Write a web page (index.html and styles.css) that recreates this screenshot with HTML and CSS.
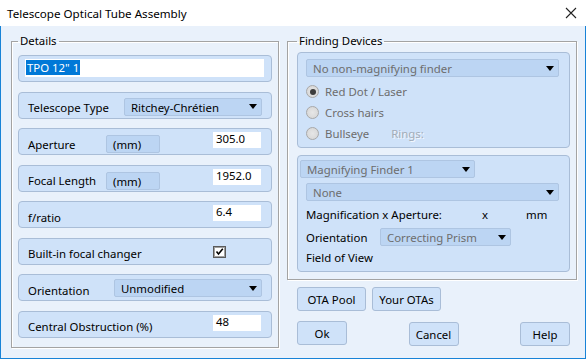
FILE: index.html
```html
<!DOCTYPE html>
<html lang="en">
    <head>
        <meta charset="UTF-8" />
        <title>Telescope Optical Tube Assembly</title>
        <link rel="stylesheet" href="styles.css">
    </head>

    <body>
        <div class="window">
            <header class="titlebar">
                <span class="title">Telescope Optical Tube Assembly</span>
                <svg class="close" width="12" height="12" viewBox="0 0 12 12">
                    <path d="M1 1 L11 11 M11 1 L1 11" stroke="#222" stroke-width="1.1" fill="none" />
                </svg>
            </header>

            <main class="content">
                <fieldset class="group details">
                    <legend>Details</legend>

                    <div class="row name_row">
                        <div class="name_input"><span class="selected">TPO 12" 1</span></div>
                    </div>
                    <div class="row">
                        <span class="lbl">Telescope Type</span>
                        <div class="combo type_combo"><span>Ritchey-Chrétien</span><i class="arrow"></i></div>
                    </div>
                    <div class="row">
                        <span class="lbl unit_lbl">Aperture</span>
                        <span class="unit">(mm)</span>
                        <span class="field">305.0</span>
                    </div>
                    <div class="row">
                        <span class="lbl unit_lbl">Focal Length</span>
                        <span class="unit">(mm)</span>
                        <span class="field">1952.0</span>
                    </div>
                    <div class="row">
                        <span class="lbl">f/ratio</span>
                        <span class="field">6.4</span>
                    </div>
                    <div class="row">
                        <span class="lbl">Built-in focal changer</span>
                        <svg class="check" width="13" height="12" viewBox="0 0 13 12">
                            <rect x="0.5" y="0.5" width="12" height="11" fill="#fff" stroke="#5a5a5a" />
                            <rect x="1.5" y="1.5" width="10" height="9" fill="none" stroke="#a0a0a0" />
                            <path d="M3.5 5.5 L5.5 8 L9.8 2.8" stroke="#000" stroke-width="1.6" fill="none" />
                        </svg>
                    </div>
                    <div class="row">
                        <span class="lbl">Orientation</span>
                        <div class="combo orient_combo"><span>Unmodified</span><i class="arrow"></i></div>
                    </div>
                    <div class="row">
                        <span class="lbl">Central Obstruction (%)</span>
                        <span class="field">48</span>
                    </div>
                </fieldset>

                <div class="right_col">
                    <fieldset class="group finding">
                        <legend>Finding Devices</legend>

                        <div class="panel finder_panel">
                            <div class="combo wide_combo off"><span>No non-magnifying finder</span><i class="arrow"></i></div>
                            <div class="radio_row"><i class="radio on"></i><span class="off_text">Red Dot / Laser</span></div>
                            <div class="radio_row"><i class="radio"></i><span class="off_text">Cross hairs</span></div>
                            <div class="radio_row"><i class="radio"></i><span class="off_text">Bullseye</span><span class="rings">Rings:</span></div>
                        </div>

                        <div class="panel mag_panel">
                            <div class="combo mag_combo off"><span>Magnifying Finder 1</span><i class="arrow"></i></div>
                            <div class="combo wide_combo off none_combo"><span>None</span><i class="arrow"></i></div>
                            <div class="mag_row first_mag">
                                <span class="mag_lbl">Magnification x Aperture:</span>
                                <span class="x">x</span>
                                <span>mm</span>
                            </div>
                            <div class="mag_row">
                                <span class="orient_lbl">Orientation</span>
                                <div class="combo prism_combo off"><span>Correcting Prism</span><i class="arrow"></i></div>
                            </div>
                            <div class="mag_row">
                                <span>Field of View</span>
                            </div>
                        </div>
                    </fieldset>

                    <div class="btn_row">
                        <button class="btn pool">OTA Pool</button>
                        <button class="btn pool">Your OTAs</button>
                    </div>
                    <div class="btn_row spread">
                        <button class="btn small ok">Ok</button>
                        <button class="btn small">Cancel</button>
                        <button class="btn small">Help</button>
                    </div>
                </div>
            </main>
        </div>
    </body>
</html>
```

FILE: styles.css
```css
* {
    box-sizing: border-box;
    padding: 0;
    margin: 0;
}
body {
    font-family: "Segoe UI", "Noto Sans", sans-serif;
    font-size: 11.4px;
    color: #000;
    background: #fff;
    white-space: nowrap;
}
.window {
    width: 586px;
    height: 359px;
    display: flex;
    flex-direction: column;
}
.titlebar {
    height: 26px;
    display: flex;
    align-items: center;
    justify-content: space-between;
    padding: 0 9px 0 7px;
    background: #fff;
}
.title {
    font-size: 11.6px;
}
.content {
    flex: 1;
    display: flex;
    gap: 8px;
    padding: 7px 9px 0 10px;
    background: #e9f1fb;
    border: 1px solid #1883d7;
    border-top: none;
}

/* group boxes */
.group {
    border: 1px solid #a3a3a3;
    box-shadow: inset 1px 1px 0 #fff, 1px 1px 0 #fff;
}
.group legend {
    padding: 0 2px;
    line-height: 16px;
}
.details {
    width: 268px;
    align-self: flex-start;
    padding: 6px 6px 9px 6px;
    display: flex;
    flex-direction: column;
    gap: 9.5px;
}

/* left rows */
.row {
    height: 27px;
    display: flex;
    align-items: center;
    padding: 0 10px 0 9px;
    background: #cfe2f9;
    border: 1px solid #a9bdd7;
    border-radius: 4px;
}
.lbl {
    margin-top: 5px;
}
.unit_lbl {
    width: 78px;
}
.unit {
    width: 54px;
    height: 18px;
    margin-top: 5px;
    padding-left: 6px;
    line-height: 17px;
    background: #bcd5f3;
    border: 1px solid #aec5e2;
    border-radius: 2px;
}
.field {
    width: 48px;
    height: 16px;
    margin-left: auto;
    margin-bottom: 3px;
    padding-left: 3px;
    line-height: 14px;
    background: #fff;
}
.check {
    margin-left: auto;
    margin-right: 35px;
    margin-top: 1px;
}
.name_row {
    padding: 0 7px 0 6px;
}
.name_input {
    width: 100%;
    height: 18px;
    margin-bottom: 1px;
    padding-left: 1px;
    line-height: 17px;
    background: #fff;
}
.selected {
    background: #0078d7;
    color: #fff;
    padding: 0 1px;
}

/* combos */
.combo {
    height: 18px;
    display: flex;
    align-items: center;
    justify-content: space-between;
    padding: 0 4px 0 6px;
    background: #bcd5f3;
    border: 1px solid #aec5e2;
    border-radius: 2px;
}
.combo span {
    margin-top: 1px;
}
.arrow {
    width: 0;
    height: 0;
    border-left: 4.5px solid transparent;
    border-right: 4.5px solid transparent;
    border-top: 5px solid #000;
}
.type_combo {
    width: 138px;
    margin-left: auto;
    margin-right: -1px;
    margin-top: 3px;
}
.orient_combo {
    width: 148px;
    margin-left: auto;
    margin-right: -1px;
    margin-top: 1px;
}
.off span {
    color: #6d6d6d;
}

/* right side */
.right_col {
    width: 289px;
    display: flex;
    flex-direction: column;
}
.finding {
    padding: 3px 6px 7px 9px;
    display: flex;
    flex-direction: column;
    gap: 7px;
}
.panel {
    background: #cfe2f9;
    border: 1px solid #a9bdd7;
    border-radius: 4px;
}
.finder_panel {
    height: 96px;
    padding: 6px 10px 0 8px;
}
.wide_combo {
    width: 253px;
}
.radio_row {
    height: 21px;
    display: flex;
    align-items: center;
    gap: 6px;
}
.finder_panel .combo + .radio_row {
    margin-top: 4px;
}
.off_text {
    color: #6d6d6d;
}
.radio {
    width: 13px;
    height: 13px;
    border-radius: 50%;
    border: 1px solid #a8a8a8;
    background: radial-gradient(circle, #e6e6e6 0, #d4d4d4 100%);
    position: relative;
}
.radio.on::after {
    content: "";
    position: absolute;
    left: 2.5px;
    top: 2.5px;
    width: 6px;
    height: 6px;
    border-radius: 50%;
    background: #3c3c3c;
}
.rings {
    margin-left: 16px;
    color: #a3acb8;
    text-shadow: 1px 1px 0 #f4f8fd;
}
.mag_panel {
    height: 117px;
    padding: 4px 10px 0 8px;
}
.mag_combo {
    width: 175px;
    margin-left: -6px;
}
.none_combo {
    margin-top: 5px;
}
.mag_row {
    height: 20px;
    display: flex;
    align-items: center;
}
.first_mag {
    margin-top: 3px;
    margin-bottom: 3px;
}
.mag_lbl {
    width: 176px;
}
.x {
    width: 44px;
}
.orient_lbl {
    width: 74px;
}
.prism_combo {
    width: 131px;
}

/* buttons */
.btn_row {
    display: flex;
    gap: 6px;
    margin: 7px 6px 0 10px;
}
.btn_row.spread {
    justify-content: space-between;
    margin-top: 10px;
}
.btn {
    height: 24px;
    font-family: inherit;
    font-size: 11.4px;
    color: #000;
    background: #cfe2f9;
    border: 1px solid #a9bdd7;
    border-radius: 3px;
}
.pool {
    width: 69px;
}
.small {
    width: 50px;
    margin-top: 1px;
}
.ok {
    margin-top: 0;
}
```
